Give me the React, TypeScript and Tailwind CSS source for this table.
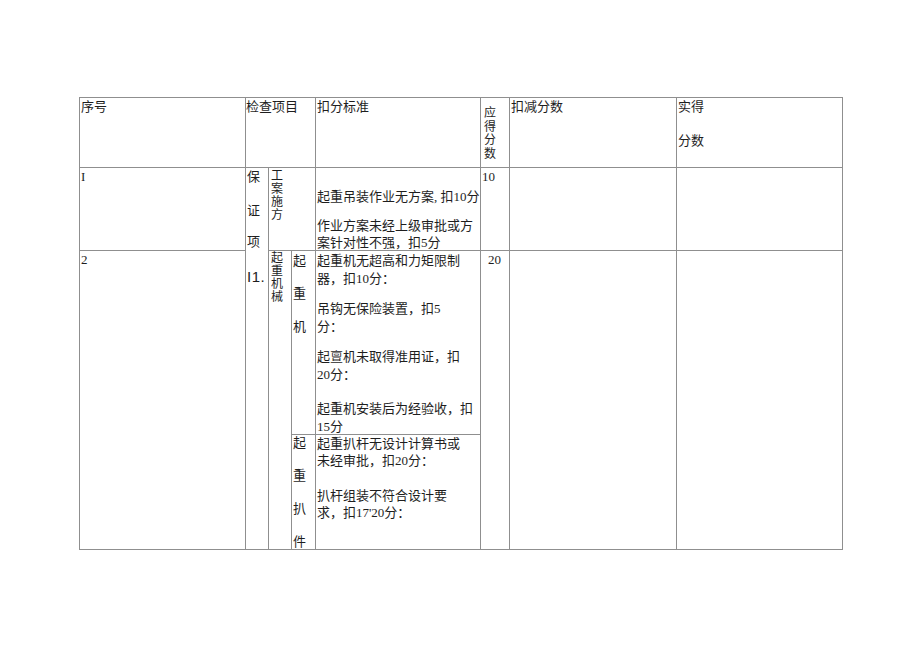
// 起重吊装检查评分表 — grid laid out like the scanned table
const CELL = "border-r border-b border-[#8f8f8f] overflow-hidden"

export default function App() {
  return (
    <div className="min-h-[651px] w-[920px] bg-white text-[#1e1e1e] text-[13px] leading-[17px] font-['Liberation_Serif','Noto_Sans_CJK_SC',serif]">
      <div className="pt-[97px] pl-[79px]">
        <div className="grid w-fit grid-cols-[166px_23px_23px_24px_165px_29px_167px_166px] grid-rows-[70px_83px_184px_115px] border-t border-l border-[#8f8f8f]">
          {/* Header row */}
          <div className={`${CELL} col-start-1 row-start-1 pl-px`}>序号</div>
          <div className={`${CELL} col-start-2 col-span-3 row-start-1 whitespace-nowrap`}>检查项目</div>
          <div className={`${CELL} col-start-5 row-start-1 pl-px`}>扣分标准</div>
          <div className={`${CELL} col-start-6 row-start-1 pl-[3px] pt-[9px] text-[12px] leading-[13.5px] flex flex-col`}>
            <span>应</span>
            <span>得</span>
            <span>分</span>
            <span>数</span>
          </div>
          <div className={`${CELL} col-start-7 row-start-1 pl-px`}>扣减分数</div>
          <div className={`${CELL} col-start-8 row-start-1 pl-px`}>
            <div>实得</div>
            <div className="mt-[17px]">分数</div>
          </div>

          {/* Item 1 */}
          <div className={`${CELL} col-start-1 row-start-2 pl-px`}>I</div>
          <div className={`${CELL} col-start-2 row-start-2 row-span-3 pl-px flex flex-col`}>
            <span>保</span>
            <span className="mt-[17px]">证</span>
            <span className="mt-[14px]">项</span>
            <span className="mt-[18px] font-['Liberation_Sans',sans-serif] text-[15px] leading-[18px] tracking-[0.5px]">I1.</span>
          </div>
          <div className={`${CELL} col-start-3 col-span-2 row-start-2 pl-[2px] pt-[2px] text-[12px] leading-[13px] flex flex-col`}>
            <span>工</span>
            <span>案</span>
            <span>施</span>
            <span>方</span>
          </div>
          <div className={`${CELL} col-start-5 row-start-2 pl-px pt-[20px] whitespace-nowrap`}>
            <div>起重吊装作业无方案, 扣10分</div>
            <div className="mt-[12px]">
              作业方案未经上级审批或方
              <br />
              案针对性不强，扣5分
            </div>
          </div>
          <div className={`${CELL} col-start-6 row-start-2 pl-px`}>10</div>
          <div className={`${CELL} col-start-7 row-start-2`} />
          <div className={`${CELL} col-start-8 row-start-2`} />

          {/* Item 2 */}
          <div className={`${CELL} col-start-1 row-start-3 row-span-2 pl-px`}>2</div>
          <div className={`${CELL} col-start-3 row-start-3 row-span-2 pl-[2px] pt-px text-[12px] leading-[13px] flex flex-col`}>
            <span>起</span>
            <span>重</span>
            <span>机</span>
            <span>械</span>
          </div>
          <div className={`${CELL} col-start-4 row-start-3 pl-px leading-[20px] flex flex-col`}>
            <span className="h-[33px]">起</span>
            <span className="h-[33px]">重</span>
            <span className="h-[33px]">机</span>
          </div>
          <div className={`${CELL} col-start-5 row-start-3 pl-px pt-px leading-[18px] whitespace-nowrap`}>
            <div>
              起重机无超高和力矩限制
              <br />
              器，扣10分：
            </div>
            <div className="mt-[12px]">
              吊钩无保险装置，扣5
              <br />
              分：
            </div>
            <div className="mt-[12px]">
              起亶机未取得准用证，扣
              <br />
              20分：
            </div>
            <div className="mt-[16px]">
              起重机安装后为经验收，扣
              <br />
              15分
            </div>
          </div>
          <div className={`${CELL} col-start-4 row-start-4 pl-px leading-[16px] flex flex-col`}>
            <span className="h-[33px] shrink-0">起</span>
            <span className="h-[33px] shrink-0">重</span>
            <span className="h-[33px] shrink-0">扒</span>
            <span className="h-[33px] shrink-0">件</span>
          </div>
          <div className={`${CELL} col-start-5 row-start-4 pl-px whitespace-nowrap`}>
            <div>
              起重扒杆无设计计算书或
              <br />
              未经审批，扣20分：
            </div>
            <div className="mt-[18px]">
              扒杆组装不符合设计要
              <br />
              求，扣17'20分：
            </div>
          </div>
          <div className={`${CELL} col-start-6 row-start-3 row-span-2 pl-[7px]`}>20</div>
          <div className={`${CELL} col-start-7 row-start-3 row-span-2`} />
          <div className={`${CELL} col-start-8 row-start-3 row-span-2`} />
        </div>
      </div>
    </div>
  )
}
